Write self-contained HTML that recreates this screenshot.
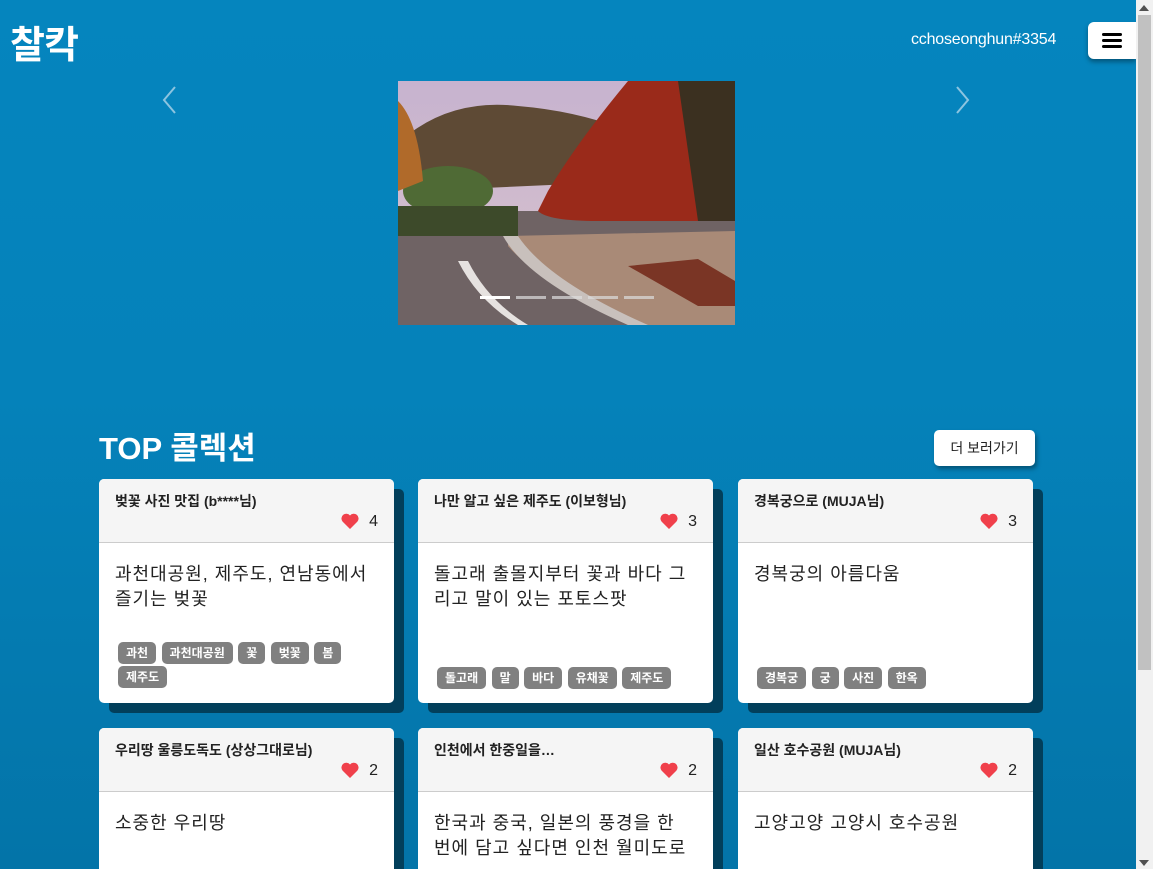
<!DOCTYPE html>
<html><head><meta charset="utf-8"><style>
*{margin:0;padding:0;box-sizing:border-box}
html{width:1153px;height:869px;overflow:hidden}
body{width:1153px;height:869px;overflow:hidden;font-family:"Liberation Sans","Noto Sans CJK KR",sans-serif;background:linear-gradient(#0585be 0%,#0582ba 45%,#0374a8 100%);position:relative}
.logo{position:absolute;left:10px;top:14px;color:#fff;font-size:38px;font-weight:bold;letter-spacing:-1px}
.user{position:absolute;left:911px;top:31px;color:#fff;font-size:16px;letter-spacing:-0.2px}
.menu{position:absolute;left:1088px;top:22px;width:48px;height:37px;background:#fff;border-radius:6px 0 0 6px;box-shadow:0 3px 5px rgba(0,0,0,.35)}
.menu i{position:absolute;left:14px;width:20px;height:3px;background:#000;border-radius:2px}
.arrow{position:absolute;top:86px;width:14px;height:28px}
.photo{position:absolute;left:398px;top:81px;width:337px;height:244px;overflow:hidden}
.sb{position:absolute;left:1136px;top:0;width:17px;height:869px;background:#f1f1f1}
.thumb{position:absolute;left:1138px;top:15px;width:13px;height:655px;background:#c1c1c1}
h2{position:absolute;left:99px;top:423px;color:#fff;font-size:31px;font-weight:bold}
.more{position:absolute;left:934px;top:430px;width:101px;height:36px;background:#fff;border-radius:5px;font-size:14px;color:#222;text-align:center;line-height:36px;box-shadow:2px 3px 4px rgba(0,0,0,.35)}
.card{position:absolute;width:295px;height:224px;background:#fff;border-radius:5px;box-shadow:10px 10px 0 #023f5b}
.card.b{height:141px;border-radius:5px 5px 0 0}
.hd{height:64px;background:#f5f5f5;border-bottom:1px solid #ccc;border-radius:5px 5px 0 0;position:relative}
.hd .t{position:absolute;left:16px;top:12px;font-size:14px;font-weight:bold;color:#222}
.hd .l{position:absolute;right:16px;top:34px;font-size:16px;color:#222}
.hd .l svg{vertical-align:-3px;margin-right:10px}
.bd{padding:19px 16px 0;font-size:18px;color:#222;line-height:25px;letter-spacing:1px}
.tags{position:absolute;left:19px;top:163px;width:262px}
.tags span{display:inline-block;background:#808080;color:#fff;font-size:12px;font-weight:bold;padding:0 8px;height:22px;line-height:22px;border-radius:5px;margin:0 1px 2px 0}
</style></head><body>
<div class="logo">찰칵</div>
<div class="user">cchoseonghun#3354</div>
<div class="menu"><i style="top:11px"></i><i style="top:17px"></i><i style="top:23px"></i></div>
<svg class="arrow" style="left:162px" viewBox="0 0 14 28"><path d="M13 1 L2 14 L13 27" fill="none" stroke="#8cc4e0" stroke-width="2"/></svg>
<svg class="arrow" style="left:956px" viewBox="0 0 14 28"><path d="M1 1 L12 14 L1 27" fill="none" stroke="#8cc4e0" stroke-width="2"/></svg>
<div class="photo"><svg width="337" height="244" viewBox="0 0 337 244">
<defs><linearGradient id="sky" x1="0" y1="0" x2="0" y2="1"><stop offset="0" stop-color="#c7b3cf"/><stop offset="1" stop-color="#d8c3cc"/></linearGradient></defs>
<rect width="337" height="244" fill="url(#sky)"/>
<path d="M15 50 Q60 18 120 25 Q180 30 230 50 L240 100 L20 110Z" fill="#5e4a35"/>
<rect x="0" y="130" width="337" height="114" fill="#6f6364"/>
<path d="M110 155 L337 150 L337 244 L230 244 Q140 200 110 165Z" fill="#a98a77"/>
<path d="M105 155 Q130 200 230 244 L250 244 Q150 200 120 155Z" fill="#c8c0bc"/>
<path d="M60 180 Q80 220 120 244 L130 244 Q90 220 70 180Z" fill="#e6e2e0"/>
<path d="M230 0 L337 0 L337 140 L200 140 Q150 140 140 130 L150 110 Q180 60 230 0Z" fill="#9a2a1a"/>
<path d="M280 0 L337 0 L337 140 L300 140Z" fill="#3b3020"/>
<ellipse cx="50" cy="110" rx="45" ry="25" fill="#4f6a35"/>
<rect x="0" y="125" width="120" height="30" fill="#3d4a2a"/>
<path d="M0 20 Q20 40 25 100 L0 110Z" fill="#b06a2a"/>
<path d="M230 185 L300 178 L337 200 L337 225 L300 225Z" fill="#7a3525"/>
<rect x="82" y="215" width="30" height="3" fill="#fff"/><rect x="118" y="215" width="30" height="3" fill="#ddd" opacity=".7"/><rect x="154" y="215" width="30" height="3" fill="#ddd" opacity=".7"/><rect x="190" y="215" width="30" height="3" fill="#ddd" opacity=".7"/><rect x="226" y="215" width="30" height="3" fill="#ddd" opacity=".7"/>
</svg></div>
<h2>TOP 콜렉션</h2>
<div class="more">더 보러가기</div>

<div class="card" style="left:99px;top:479px"><div class="hd"><div class="t">벚꽃 사진 맛집 (b****님)</div><div class="l"><svg width="18" height="16" viewBox="0 0 18 16"><path d="M9 16 L1.5 8.5 A4.3 4.3 0 0 1 9 2.5 A4.3 4.3 0 0 1 16.5 8.5Z" fill="#f0404b"/></svg>4</div></div><div class="bd">과천대공원, 제주도, 연남동에서 즐기는 벚꽃</div><div class="tags"><span>과천</span> <span>과천대공원</span> <span>꽃</span> <span>벚꽃</span> <span>봄</span> <span>제주도</span></div></div>

<div class="card" style="left:418px;top:479px"><div class="hd"><div class="t">나만 알고 싶은 제주도 (이보형님)</div><div class="l"><svg width="18" height="16" viewBox="0 0 18 16"><path d="M9 16 L1.5 8.5 A4.3 4.3 0 0 1 9 2.5 A4.3 4.3 0 0 1 16.5 8.5Z" fill="#f0404b"/></svg>3</div></div><div class="bd">돌고래 출몰지부터 꽃과 바다 그리고 말이 있는 포토스팟</div><div class="tags" style="top:188px"><span>돌고래</span> <span>말</span> <span>바다</span> <span>유채꽃</span> <span>제주도</span></div></div>

<div class="card" style="left:738px;top:479px"><div class="hd"><div class="t">경복궁으로 (MUJA님)</div><div class="l"><svg width="18" height="16" viewBox="0 0 18 16"><path d="M9 16 L1.5 8.5 A4.3 4.3 0 0 1 9 2.5 A4.3 4.3 0 0 1 16.5 8.5Z" fill="#f0404b"/></svg>3</div></div><div class="bd">경복궁의 아름다움</div><div class="tags" style="top:188px"><span>경복궁</span> <span>궁</span> <span>사진</span> <span>한옥</span></div></div>

<div class="card b" style="left:99px;top:728px"><div class="hd"><div class="t">우리땅 울릉도독도 (상상그대로님)</div><div class="l"><svg width="18" height="16" viewBox="0 0 18 16"><path d="M9 16 L1.5 8.5 A4.3 4.3 0 0 1 9 2.5 A4.3 4.3 0 0 1 16.5 8.5Z" fill="#f0404b"/></svg>2</div></div><div class="bd">소중한 우리땅</div></div>

<div class="card b" style="left:418px;top:728px"><div class="hd"><div class="t">인천에서 한중일을…</div><div class="l"><svg width="18" height="16" viewBox="0 0 18 16"><path d="M9 16 L1.5 8.5 A4.3 4.3 0 0 1 9 2.5 A4.3 4.3 0 0 1 16.5 8.5Z" fill="#f0404b"/></svg>2</div></div><div class="bd">한국과 중국, 일본의 풍경을 한 번에 담고 싶다면 인천 월미도로</div></div>

<div class="card b" style="left:738px;top:728px"><div class="hd"><div class="t">일산 호수공원 (MUJA님)</div><div class="l"><svg width="18" height="16" viewBox="0 0 18 16"><path d="M9 16 L1.5 8.5 A4.3 4.3 0 0 1 9 2.5 A4.3 4.3 0 0 1 16.5 8.5Z" fill="#f0404b"/></svg>2</div></div><div class="bd">고양고양 고양시 호수공원</div></div>

<div class="sb"></div><div class="thumb"></div>
<svg style="position:absolute;left:1139px;top:5px" width="10" height="6"><path d="M0 6 L5 0 L10 6Z" fill="#505050"/></svg>
<svg style="position:absolute;left:1139px;top:860px" width="10" height="6"><path d="M0 0 L5 6 L10 0Z" fill="#505050"/></svg>
</body></html>
